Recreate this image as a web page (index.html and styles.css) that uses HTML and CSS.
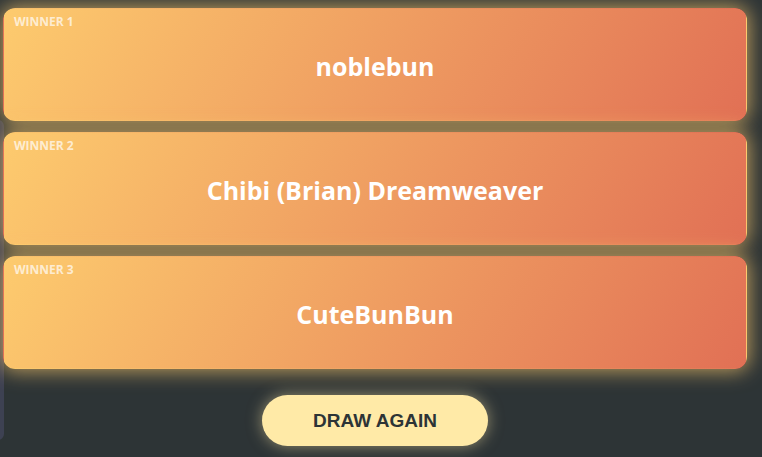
FILE: index.html
```html
<!DOCTYPE html>
<html lang="en">
<head>
  <meta charset="UTF-8" />
  <title>Winners</title>
  <meta name="viewport" content="width=device-width, initial-scale=1.0" />
  <link rel="stylesheet" href="styles.css">
</head>
<body>

<div class="side-panel"></div>

<div class="results">
  <div class="winner-card">
    <div class="winner-label">Winner 1</div>
    <div class="winner-name">noblebun</div>
  </div>
  <div class="winner-card">
    <div class="winner-label">Winner 2</div>
    <div class="winner-name">Chibi (Brian) Dreamweaver</div>
  </div>
  <div class="winner-card">
    <div class="winner-label">Winner 3</div>
    <div class="winner-name">CuteBunBun</div>
  </div>

  <button class="draw-btn">DRAW AGAIN</button>
</div>

</body>
</html>
```

FILE: styles.css
```css
body {
  margin: 0;
  font-family: 'Open Sans', 'Noto Sans', sans-serif;
  background-color: #2d3436;
  height: 457px;
  overflow: hidden;
  position: relative;
}
.side-panel {
  position: absolute;
  left: -20px;
  top: 120px;
  width: 24px;
  height: 320px;
  background-color: #3d4152;
  border-radius: 6px;
}
.results {
  position: relative;
  display: flex;
  flex-direction: column;
  gap: 11px;
  padding: 8px 15px 0 3px;
}
.winner-card {
  border: 1px solid transparent;
  border-radius: 12px;
  background: linear-gradient(120deg, #fdcb6e, #e17055);
  box-shadow: 0 0 20px 2px rgba(253, 203, 110, 0.7);
  display: flex;
  flex-direction: column;
  padding: 6px 10px;
  height: 99px;
}
.winner-label {
  font-size: 12px;
  font-weight: bold;
  text-transform: uppercase;
  color: rgba(255, 255, 255, 0.7);
  line-height: 14px;
}
.winner-name {
  flex: 1;
  display: flex;
  align-items: center;
  justify-content: center;
  font-size: 25px;
  font-weight: bold;
  color: #fff;
  padding-bottom: 12px;
}
.draw-btn {
  align-self: center;
  margin-top: 15px;
  width: 226px;
  height: 51px;
  border: none;
  border-radius: 26px;
  background-color: #ffeaa7;
  color: #2d3436;
  font-family: 'Liberation Sans', Arial, sans-serif;
  font-size: 19px;
  font-weight: bold;
  box-shadow: 0 0 15px rgba(255, 234, 167, 0.5);
  cursor: pointer;
}
```
